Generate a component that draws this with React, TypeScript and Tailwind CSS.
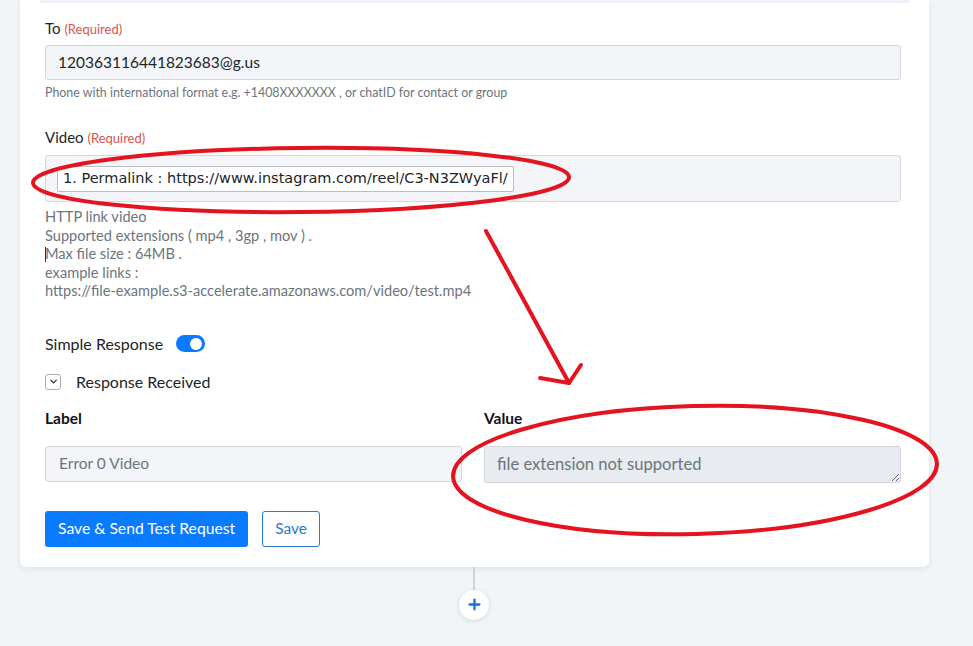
import React from 'react';
import { ChevronDown, Plus } from 'lucide-react';

const ui = { fontFamily: 'Lato, "Open Sans", sans-serif' };

const FieldLabel: React.FC<{ text: string }> = ({ text }) => (
  <div className="text-[15px] leading-5 text-[#212529]">
    {text} <span className="text-[13px] text-[#d9534f]">(Required)</span>
  </div>
);

const Annotations: React.FC = () => (
  <svg
    className="absolute inset-0 pointer-events-none"
    width="973"
    height="646"
    viewBox="0 0 973 646"
    fill="none"
  >
    <g stroke="#e3141f" strokeLinecap="round" strokeLinejoin="round">
      <ellipse cx="301" cy="180" rx="268" ry="32" strokeWidth="4" transform="rotate(-0.6 301 180)" />
      <path d="M486 231 L569 383" strokeWidth="4" />
      <path d="M540 378 L569 383 L581 365" strokeWidth="4" />
      <ellipse cx="695" cy="470" rx="242" ry="64" strokeWidth="4" transform="rotate(-1.5 695 470)" />
    </g>
  </svg>
);

export default function App() {
  return (
    <div className="relative min-h-[646px] w-[973px] bg-[#f2f5f8] overflow-hidden" style={ui}>
      <div className="ml-[20px] w-[909px] bg-white rounded-b-md shadow-[0_2px_6px_rgba(0,0,0,0.08)]">
        <div className="mx-[20px] h-[3px] bg-[#edf2f9]" />

        <div className="px-[25px] pt-[15px] pb-[20px]">
          <FieldLabel text="To" />
          <div className="mt-[6px] h-[35px] w-[856px] flex items-center px-[12px] bg-[#f3f5f8] border border-[#d3d8de] rounded-[3px] text-[15.5px] text-[#212529]">
            120363116441823683@g.us
          </div>
          <div className="mt-[5px] text-[12.4px] leading-4 text-[#6c757d]">
            Phone with international format e.g. +1408XXXXXXX , or chatID for contact or group
          </div>

          <div className="mt-[26px]">
            <FieldLabel text="Video" />
          </div>
          <div className="mt-[7px] h-[47px] w-[856px] flex items-center px-[11px] bg-[#f3f5f8] border border-[#d3d8de] rounded-[3px]">
            <div
              className="h-[26px] flex items-center px-[5px] bg-white border border-[#b9bec4] rounded-[2px] text-[14.5px] text-[#212529]"
              style={{ fontFamily: '"DejaVu Sans", Verdana, sans-serif' }}
            >
              1. Permalink : https://www.instagram.com/reel/C3-N3ZWyaFl/
            </div>
          </div>
          <div className="mt-[6px] text-[14.6px] leading-[18.5px] text-[#6c757d]">
            <div>HTTP link video</div>
            <div>Supported extensions ( mp4 , 3gp , mov ) .</div>
            <div className="flex items-center">
              <span className="inline-block w-px h-[15px] bg-[#333] -mr-px" />
              Max file size : 64MB .
            </div>
            <div>example links :</div>
            <div>https://file-example.s3-accelerate.amazonaws.com/video/test.mp4</div>
          </div>

          <div className="mt-[33px] flex items-center gap-[13px] h-5">
            <span className="text-[16px] text-[#212529]">Simple Response</span>
            <span className="relative w-[29px] h-[17px] rounded-full bg-[#0a7bff]">
              <span className="absolute right-[3px] top-[2.5px] w-[12px] h-[12px] rounded-full bg-white" />
            </span>
          </div>

          <div className="mt-[18px] flex items-center gap-[15px] h-5">
            <span className="w-[16px] h-[16px] rounded-[3px] border border-[#aab0b7] flex items-center justify-center">
              <ChevronDown size={11} strokeWidth={3} className="text-[#333]" />
            </span>
            <span className="text-[16px] text-[#212529]">Response Received</span>
          </div>

          <div className="mt-[17px] grid grid-cols-2 gap-x-[22px] w-[856px]">
            <div className="text-[15.5px] leading-[18px] font-bold text-[#111]">Label</div>
            <div className="text-[15.5px] leading-[18px] font-bold text-[#111]">Value</div>
            <div className="mt-[19px] h-[36px] flex items-center px-[13px] bg-[#f3f5f8] border border-[#d3d8de] rounded-[3px] text-[15.5px] text-[#6c757d]">
              Error 0 Video
            </div>
            <textarea
              readOnly
              value="file extension not supported"
              className="mt-[19px] h-[37px] px-[12px] py-[7px] bg-[#e8ebef] border border-[#d3d8de] rounded-[3px] text-[16.6px] leading-5 text-[#6c757d] outline-none"
              style={ui}
            />
          </div>

          <div className="mt-[28px] flex items-center gap-[14px]">
            <button className="h-[36px] px-[13px] rounded-[3px] bg-[#0a7bff] text-white text-[15.7px]">
              Save &amp; Send Test Request
            </button>
            <button className="h-[36px] px-[12px] rounded-[3px] border border-[#2a78d6] text-[#2a78d6] text-[15.5px] bg-white">
              Save
            </button>
          </div>
        </div>
      </div>

      <div className="flex flex-col items-center w-[948px]">
        <div className="w-[2px] h-[23px] bg-[#cfd3d8]" />
        <div className="w-[30px] h-[30px] rounded-full bg-white shadow-[0_1px_5px_rgba(0,0,0,0.12)] flex items-center justify-center">
          <Plus size={17} strokeWidth={3.2} className="text-[#1a6fe8]" />
        </div>
      </div>

      <Annotations />
    </div>
  );
}
